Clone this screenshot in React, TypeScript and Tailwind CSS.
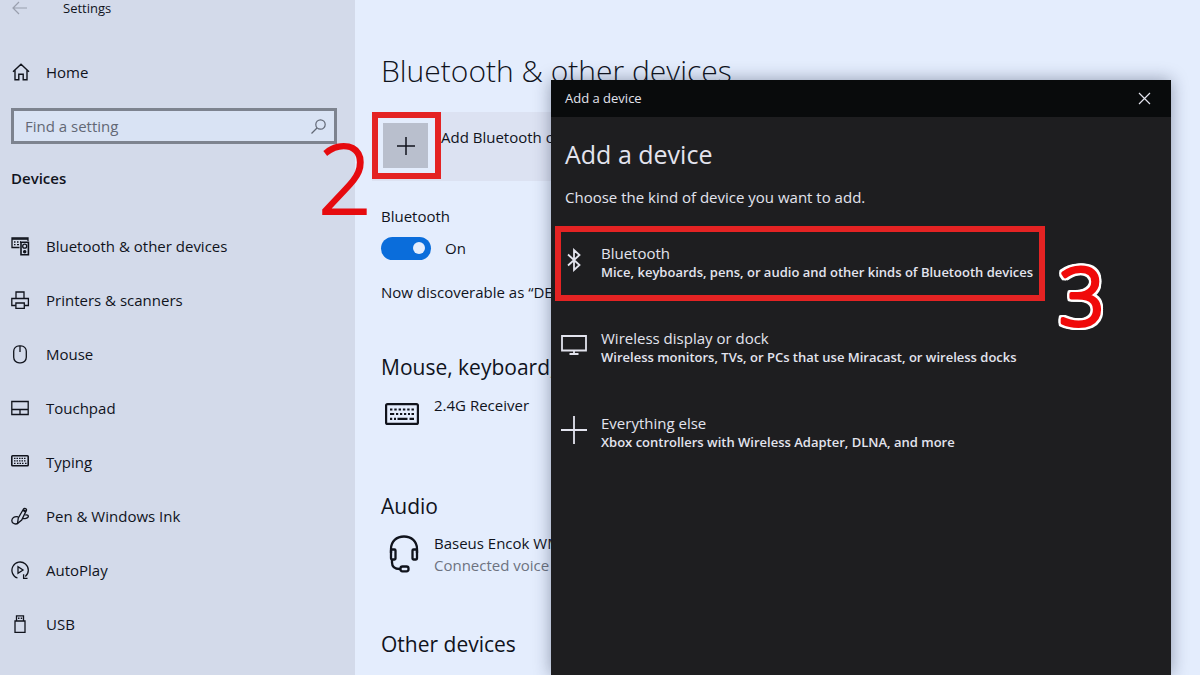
import type { ReactNode } from "react";
import clsx from "clsx";

function Icon({
  w,
  h,
  stroke = 1.3,
  className,
  children,
}: {
  w: number;
  h: number;
  stroke?: number;
  className?: string;
  children: ReactNode;
}) {
  return (
    <svg
      width={w}
      height={h}
      viewBox={`0 0 ${w} ${h}`}
      fill="none"
      stroke="currentColor"
      strokeWidth={stroke}
      aria-hidden="true"
      className={clsx("shrink-0", className)}
    >
      {children}
    </svg>
  );
}

const navItems = [
  {
    label: "Bluetooth & other devices",
    icon: (
      <>
        <path d="M8.500 10.500H1V1h16v3" />
        <path d="M1 2h16" strokeWidth="1.6" />
        <path d="M3 5h1.500M6 5h1.500M9 5h1M3 7.700h1.500M6 7.700h2" />
        <path d="M10 5.200h7.400v12.600H10z" strokeWidth="1.6" />
        <circle cx="13.7" cy="9.2" r="2" />
        <circle cx="13.7" cy="14.7" r="1.1" fill="currentColor" />
      </>
    ),
  },
  {
    label: "Printers & scanners",
    icon: (
      <>
        <path d="M5 7.500V1h8v6.500" />
        <path d="M4.800 14.500H.800v-7h16.600v7h-4" />
        <path d="M4.900 12h8.400v5.400H4.900z" />
      </>
    ),
  },
  {
    label: "Mouse",
    icon: (
      <>
        <rect x="2.7" y="0.8" width="12.600" height="17" rx="5.5" />
        <path d="M9 1v6" />
      </>
    ),
  },
  {
    label: "Touchpad",
    icon: <path d="M.800 2.500h16.400v13H.800zM.800 10.500h16.400M9 10.500v5" />,
  },
  {
    label: "Typing",
    icon: (
      <>
        <rect x="0.8" y="2.8" width="16.400" height="10" rx="0.8" strokeWidth="1.6" />
        <path
          d="M3 5.400h12.500M3 7.800h12.500M3 10.300h1.500M6 10.300h6.500M14 10.300h1.500"
          strokeDasharray="1.5 1"
        />
      </>
    ),
  },
  {
    label: "Pen & Windows Ink",
    icon: (
      <>
        <path d="M6.500 16.500 7.300 11 12.500 2c.8-1.400 3.600-.2 2.900 1.400L10.700 13z" />
        <path d="M12 3l3 1.600" strokeWidth="2" />
        <path d="M7.200 9.800C3 9 .800 11.200.800 13.800c0 3 4.200 4.100 6.400 2.200" />
        <path d="M14.300 8c3.800-.6 4 2.300.7 3.300-1.500.5-2.600.4-3.600 0" />
      </>
    ),
  },
  {
    label: "AutoPlay",
    icon: (
      <>
        <path d="M6.500 17A8.200 8.200 0 1 1 14.300 15.600" />
        <path d="M12.600 13.200v4.300M12 17.300h4.500" />
        <path d="M7 5.800v6.400l5-3.200z" />
      </>
    ),
  },
  {
    label: "USB",
    icon: (
      <>
        <path d="M5.500 6V.800h7V6" />
        <path d="M4 6h10v11.300H4z" />
        <path d="M7 3.200h1.500M9.700 3.200h1.500" strokeWidth="1.6" />
      </>
    ),
  },
];

const deviceKinds = [
  {
    title: "Bluetooth",
    description: "Mice, keyboards, pens, or audio and other kinds of Bluetooth devices",
    highlighted: true,
    icon: (
      <Icon w={14} h={24} stroke={1.8}>
        <path d="M1 6.500 12.500 17 7 22V2l5.500 5L1 17.500" />
      </Icon>
    ),
  },
  {
    title: "Wireless display or dock",
    description: "Wireless monitors, TVs, or PCs that use Miracast, or wireless docks",
    highlighted: false,
    icon: (
      <Icon w={26} h={20} stroke={1.8}>
        <path d="M1 1h24v14.500H1zM13 15.500V19M8.500 19h9" />
      </Icon>
    ),
  },
  {
    title: "Everything else",
    description: "Xbox controllers with Wireless Adapter, DLNA, and more",
    highlighted: false,
    icon: (
      <Icon w={26} h={28} stroke={1.8}>
        <path d="M0 14h26M13 0v28" />
      </Icon>
    ),
  },
];

function Sidebar() {
  return (
    <aside className="w-[355px] shrink-0 bg-[#d3daea]">
      <div className="flex h-4 items-center pl-3">
        <button type="button" aria-label="Back" className="text-[#9aa0ae]">
          <Icon w={15} h={14} stroke={1.2}>
            <path d="M15 7H1M7 1 1 7l6 6" />
          </Icon>
        </button>
        <span className="ml-9 text-[13px] leading-4">Settings</span>
      </div>

      <a href="#home" className="mt-[38px] flex h-9 items-center gap-4 pl-3 text-[15px]">
        <Icon w={18} h={18} stroke={1.4}>
          <path d="M1 8.700 9 1.200l8 7.500M3 7.300v9.500h3.800v-5.500h4.400v5.500H15V7.300" />
        </Icon>
        Home
      </a>

      <div className="mt-[18px] mr-[18px] ml-[11px] flex h-9 items-center border-3 border-[#7d838f] bg-[#d9e3f4] pr-2 text-[#626875]">
        <input
          type="text"
          aria-label="Find a setting"
          placeholder="Find a setting"
          className="h-full min-w-0 flex-1 bg-transparent pl-[11px] text-[15px] outline-none placeholder:text-[#626875]"
        />
        <Icon w={15} h={15} stroke={1.2}>
          <circle cx="9.500" cy="5.500" r="4.700" />
          <path d="M6 9 .500 14.500" />
        </Icon>
      </div>

      <h2 className="mt-[22px] pl-[11px] text-[15px] leading-6 font-semibold">Devices</h2>

      <nav className="mt-[29px]">
        {navItems.map((item) => (
          <a
            key={item.label}
            href="#devices"
            className="flex h-[54px] items-center gap-4 pl-[11px] text-[15px]"
          >
            <Icon w={19} h={19}>
              {item.icon}
            </Icon>
            {item.label}
          </a>
        ))}
      </nav>
    </aside>
  );
}

function DeviceSettings() {
  return (
    <main className="min-w-0 flex-1 overflow-hidden pl-[26px] whitespace-nowrap">
      <h1 className="mt-[51px] text-[30px] leading-10 font-light">Bluetooth &amp; other devices</h1>

      <div className="mt-[21px] -ml-[9px] flex h-[69px] w-[600px] items-start bg-[#dce2f2]">
        <div className="h-[67px] w-[69px] border-6 border-[#e42323] bg-[#e4edfd] p-[5px]">
          <button
            type="button"
            aria-label="Add Bluetooth or other device"
            className="flex h-[45px] w-[45px] items-center justify-center bg-[#b9bfcd]"
          >
            <Icon w={18} h={18} stroke={1.5}>
              <path d="M0 9h18M9 0v18" />
            </Icon>
          </button>
        </div>
        <span className="mt-[13px] text-[15px] leading-6">Add Bluetooth or other device</span>
      </div>

      <p className="mt-[23px] text-[15px] leading-6">Bluetooth</p>
      <label className="mt-2 flex h-6 items-center gap-[14px] text-[15px]">
        <input
          type="checkbox"
          role="switch"
          defaultChecked
          className="flex h-[23px] w-[50px] appearance-none items-center justify-end rounded-full bg-[#0a6ddb] pr-[6px] before:size-3 before:rounded-full before:bg-[#e4edfd]"
        />
        On
      </label>
      <p className="mt-5 text-[15px] leading-6">Now discoverable as “DESKTOP”</p>

      <h2 className="mt-[47px] text-[21px] leading-8">Mouse, keyboard, &amp; pen</h2>
      <div className="mt-[10px] flex pl-1">
        <Icon w={34} h={22} stroke={2.2} className="mt-[10px]">
          <rect x="1.100" y="1.100" width="31.800" height="19.800" rx="1.500" />
          <path d="M5 6.500h24" strokeDasharray="2.400 1.900" />
          <path d="M5 11h4.200M11 11h2.200M15 11h2.200M19 11h2.200M23 11h2M26.500 11h2.500" />
          <path d="M5 15.800h2.200M9 15.800h2M12.500 15.800h10M24.500 15.800h4.500" />
        </Icon>
        <p className="ml-[15px] text-[15px] leading-6">2.4G Receiver</p>
      </div>

      <h2 className="mt-[65px] text-[21px] leading-8">Audio</h2>
      <div className="mt-[10px] flex pl-1">
        <Icon w={34} h={38} stroke={2.3} className="mt-[3px]">
          <path d="M6 18v-4C6 6.500 11.500 1.500 19 1.500S32 6.500 32 14v4" />
          <rect x="6" y="14.500" width="4.500" height="10" rx="1" />
          <rect x="27.500" y="14.500" width="4.500" height="10" rx="1" />
          <path d="M7 25v2.500c0 4 3 6.500 8 6.500" />
          <rect x="15.500" y="31.500" width="8" height="4.800" rx="2" />
        </Icon>
        <div className="ml-[15px] text-[15px] leading-[22px]">
          <p>Baseus Encok WM01</p>
          <p className="text-[#6d7381]">Connected voice</p>
        </div>
      </div>

      <h2 className="mt-[52px] text-[21px] leading-8">Other devices</h2>
    </main>
  );
}

function AddDeviceDialog() {
  return (
    <section
      role="dialog"
      aria-label="Add a device"
      className="absolute top-20 right-[29px] bottom-0 w-[620px] bg-[#1e1e20] text-[#e3e4ee] shadow-[0_0_16px_rgba(20,30,60,0.4)]"
    >
      <header className="flex h-[37px] items-center justify-between bg-[#090b0c] pr-5 pl-[14px]">
        <span className="text-[13px]">Add a device</span>
        <button type="button" aria-label="Close">
          <Icon w={13} h={13} stroke={1.2}>
            <path d="m1 1 11 11M12 1 1 12" />
          </Icon>
        </button>
      </header>

      <h2 className="mt-[21px] pl-[14px] text-[25px] leading-8">Add a device</h2>
      <p className="mt-[15px] pl-[14px] text-[15px] leading-6">
        Choose the kind of device you want to add.
      </p>

      <div className="mt-[17px] flex flex-col items-start gap-[10px] pl-1">
        {deviceKinds.map((kind) => (
          <button
            key={kind.title}
            type="button"
            className={clsx(
              "flex h-[75px] w-[490px] items-center gap-[14px] border-6 pb-[2px] text-left",
              kind.highlighted ? "border-[#e42323]" : "border-transparent",
            )}
          >
            <span className="flex w-[26px] shrink-0 justify-center pb-[6px]">{kind.icon}</span>
            <span className="flex flex-col whitespace-nowrap">
              <span className="text-[15px] leading-[19px]">{kind.title}</span>
              <span className="text-[13px] leading-[19px] font-semibold">{kind.description}</span>
            </span>
          </button>
        ))}
      </div>
    </section>
  );
}

export default function App() {
  return (
    <div className="relative flex h-screen overflow-hidden bg-[#e4edfd] font-['Open_Sans',sans-serif] text-[#10131c]">
      <Sidebar />
      <DeviceSettings />
      <AddDeviceDialog />

      {/* step markers */}
      <span className="absolute top-[130px] left-[318px] text-[95px] leading-none font-light text-[#e60b0f] [-webkit-text-stroke:2px_#e60b0f]">
        2
      </span>
      <svg
        width="70"
        height="130"
        viewBox="0 0 70 130"
        className="absolute top-[230px] left-[1048px] [filter:drop-shadow(2px_0_0_white)_drop-shadow(-2px_0_0_white)_drop-shadow(0_2px_0_white)_drop-shadow(0_-2px_0_white)]"
      >
        <text
          x="11"
          y="95"
          fontSize="80"
          fontWeight="300"
          fill="#f00a0a"
          stroke="#f00a0a"
          strokeWidth="4"
          strokeLinejoin="round"
        >
          3
        </text>
      </svg>
    </div>
  );
}
